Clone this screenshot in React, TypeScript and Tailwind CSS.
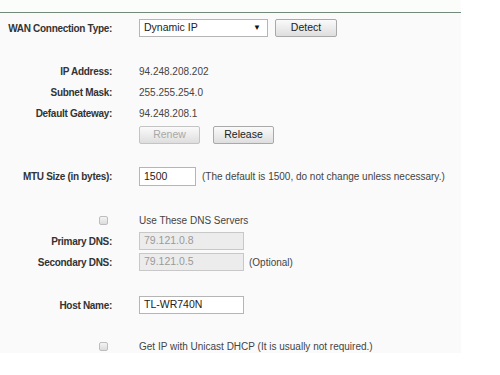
const font = { fontFamily: '"Liberation Sans", Arial, sans-serif' }

function Label({ children }: { children?: React.ReactNode }) {
  return (
    <div className="w-[112px] shrink-0 text-right text-[10px] font-bold tracking-[-0.3px] text-[#333]">
      {children}
    </div>
  )
}

function Row({ label, h, mt, children }: { label?: React.ReactNode; h: string; mt: string; children?: React.ReactNode }) {
  return (
    <div className={`flex items-center ${h} ${mt}`}>
      <Label>{label}</Label>
      <div className="ml-[27px] flex items-center text-[10px] text-[#444]">{children}</div>
    </div>
  )
}

function Btn({ children, disabled, w }: { children: React.ReactNode; disabled?: boolean; w: string }) {
  return (
    <div
      className={`${w} flex items-center justify-center rounded-[2px] border border-[#a9a9a9] bg-gradient-to-b from-[#fafafa] to-[#dedede] text-[10.5px] ${disabled ? 'text-[#a8a8a8] border-[#c4c4c4]' : 'text-[#222]'}`}
    >
      {children}
    </div>
  )
}

function Box({ children, w, disabled }: { children: React.ReactNode; w: string; disabled?: boolean }) {
  return (
    <div
      className={`${w} h-[18px] flex items-center px-[4px] border text-[10.5px] ${disabled ? 'bg-[#ececec] border-[#c8c8c8] text-[#9a9a9a]' : 'bg-white border-[#b5b5b5] text-[#222]'}`}
    >
      {children}
    </div>
  )
}

function Check() {
  return (
    <div className="w-[112px] shrink-0 flex justify-end pr-[4px]">
      <div className="w-[9px] h-[9px] rounded-[2px] border border-[#bdbdbd] bg-gradient-to-b from-[#f4f4f4] to-[#dcdcdc]" />
    </div>
  )
}

export default function App() {
  return (
    <div className="w-[500px] h-[375px] bg-white" style={font}>
      <div className="w-[461px]">
        <div className="h-[12px] bg-[#fbfdfb]" />
        <div className="h-px bg-[#74897c]" />
        <div className="bg-[#fafafa] h-[340px] flex flex-col">
          {/* WAN type */}
          <Row label="WAN Connection Type:" h="h-[18px]" mt="mt-[6px]">
            <div className="w-[129px] h-[18px] flex items-center justify-between pl-[4px] pr-[6px] bg-white border border-[#b5b5b5] text-[10.5px] text-[#222]">
              <span>Dynamic IP</span>
              <span className="text-[8px] text-[#111]">▼</span>
            </div>
            <div className="ml-[7px] h-[18px] flex">
              <Btn w="w-[62px]">Detect</Btn>
            </div>
          </Row>

          {/* Status */}
          <Row label="IP Address:" h="h-[21px]" mt="mt-[24px]">94.248.208.202</Row>
          <Row label="Subnet Mask:" h="h-[21px]" mt="mt-0">255.255.254.0</Row>
          <Row label="Default Gateway:" h="h-[21px]" mt="mt-0">94.248.208.1</Row>
          <Row h="h-[18px]" mt="mt-[2px]">
            <div className="h-[18px] flex gap-[13px]">
              <Btn w="w-[61px]" disabled>Renew</Btn>
              <Btn w="w-[61px]">Release</Btn>
            </div>
          </Row>

          {/* MTU */}
          <Row label="MTU Size (in bytes):" h="h-[19px]" mt="mt-[23px]">
            <div className="w-[57px] h-[19px] flex items-center px-[4px] bg-white border border-[#b5b5b5] text-[10.5px] text-[#222]">1500</div>
            <span className="ml-[6px] text-[10px] text-[#444]">(The default is 1500, do not change unless necessary.)</span>
          </Row>

          {/* DNS */}
          <div className="flex items-center h-[20px] mt-[24px]">
            <Check />
            <div className="ml-[27px] text-[10px] text-[#444]">Use These DNS Servers</div>
          </div>
          <Row label="Primary DNS:" h="h-[18px]" mt="mt-[2px]">
            <Box w="w-[105px]" disabled>79.121.0.8</Box>
          </Row>
          <Row label="Secondary DNS:" h="h-[18px]" mt="mt-[3px]">
            <Box w="w-[105px]" disabled>79.121.0.5</Box>
            <span className="ml-[5px]">(Optional)</span>
          </Row>

          {/* Host */}
          <Row label="Host Name:" h="h-[18px]" mt="mt-[25px]">
            <Box w="w-[105px]">TL-WR740N</Box>
          </Row>

          <div className="flex items-center h-[14px] mt-[25px]">
            <Check />
            <div className="ml-[27px] text-[10px] text-[#444]">Get IP with Unicast DHCP (It is usually not required.)</div>
          </div>
        </div>
      </div>
    </div>
  )
}
